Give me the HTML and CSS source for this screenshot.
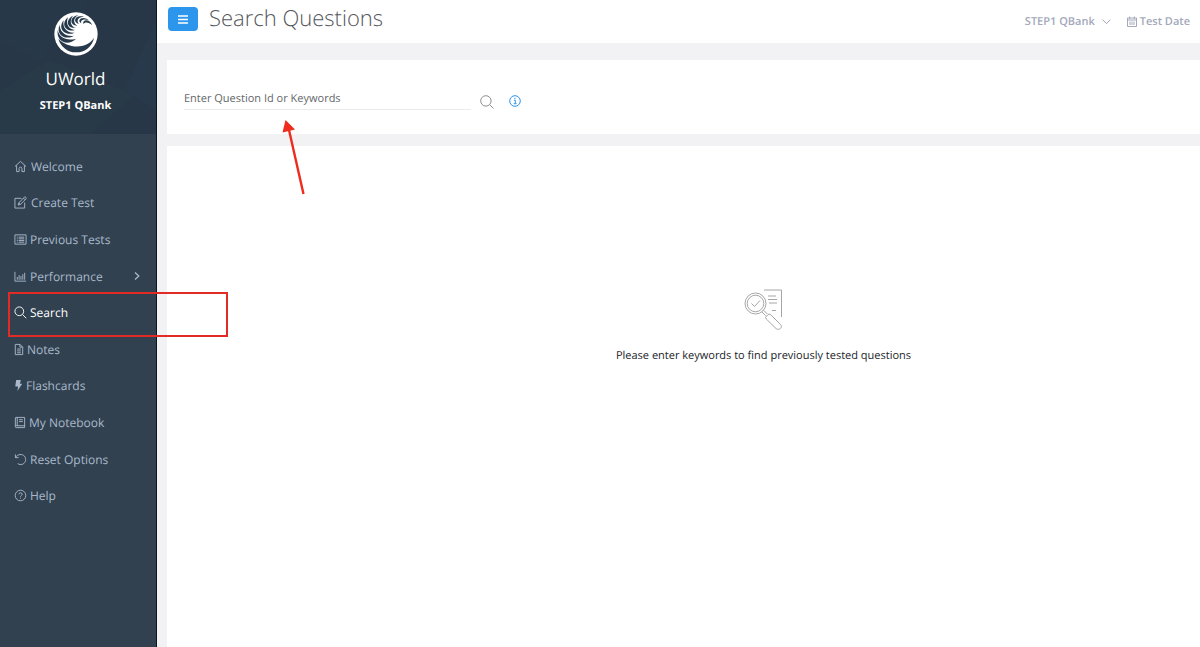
FILE: index.html
```html
<!DOCTYPE html>
<html lang="en">
<head>
<meta charset="utf-8">
<title>Search Questions</title>
<link rel="stylesheet" href="styles.css">
</head>
<body>
<div class="app">
  <aside class="sidebar">
    <div class="brand">
      <svg class="brand-facets" viewBox="0 0 156 134" preserveAspectRatio="none" aria-hidden="true"><path d="M0 0H90L40 60 0 40Z" fill="#29404f" opacity=".2"/><path d="M156 20L125 90 156 110Z" fill="#263f57" opacity=".25"/><path d="M0 90L50 60 135 95 90 134H0Z" fill="#2a3b48" opacity=".4"/></svg>
      <svg class="logo" viewBox="0 0 132 132" aria-hidden="true">
        <circle cx="66" cy="66" r="65" fill="#fff"/>
        <g fill="#263a4b">
          <path d="M13 80C30 99 62 108 87 101C102 97 113 89 120 77C115 104 93 121 66 121C40 121 20 104 13 80Z"/>
          <path d="M11 54C15 76 37 88 66 80C44 103 6 92 11 54Z"/>
          <path d="M17 38C17 60 36 75 61 71C34 87 4 68 17 38Z"/>
          <path d="M29 25C24 47 39 64 62 62C34 75 9 50 29 25Z"/>
          <path d="M42 16C34 36 44 53 63 54C36 63 18 36 42 16Z"/>
          <path d="M57 11C45 26 50 44 66 47C42 52 30 25 57 11Z"/>
          <path d="M73 9C57 18 57 34 70 41C49 42 43 15 73 9Z"/>
          <path d="M90 14C72 15 66 26 75 36C55 31 61 6 90 14Z"/>
          <path d="M105 25C89 19 78 25 82 34C66 25 85 8 105 25Z"/>
          <path d="M115 40C104 29 92 29 88 36C84 22 107 19 115 40Z"/>
        </g>
      </svg>
      <div class="brand-name">UWorld</div>
      <div class="brand-product">STEP1 QBank</div>
    </div>
    <nav class="nav" aria-label="Main">
      <a class="nav-item" href="#"><svg class="icon home" viewBox="0 0 14 14"><path d="M1 7L7 1.5 13 7M2.8 5.8V12.5H5.5V9C5.5 7.2 8.5 7.2 8.5 9V12.5H11.2V5.8"/></svg>Welcome</a>
      <a class="nav-item" href="#"><svg class="icon home" viewBox="0 0 14 14"><path d="M8 2.5H1V13H11.5V7M4.5 9.8L5.3 7.2 11.3 1.2Q12 .7 12.8 1.5T13 3L7 9ZM10.2 2.3L12 4.1M5.3 7.2L7 9"/></svg>Create Test</a>
      <a class="nav-item" href="#"><svg class="icon" viewBox="0 0 14 14"><path d="M1 2H13V12H1ZM3 4.5H4M5 4.5H11M3 6.3H4M5 6.3H11M3 8.1H4M5 8.1H11M3 9.9H4M5 9.9H11"/></svg>Previous Tests</a>
      <a class="nav-item" href="#"><svg class="icon" viewBox="0 0 14 14"><path d="M1 2V12H13M3.5 10.5V7.5M5.5 10.5V5.5M7.5 10.5V6.5M9.5 10.5V4.5M11.5 10.5V3"/></svg>Performance<svg class="caret" viewBox="0 0 6 8"><path d="M1 .5L4.8 4 1 7.5"/></svg></a>
      <a class="nav-item active" href="#" aria-current="page"><svg class="icon" viewBox="0 0 14 14"><circle cx="5.7" cy="5.7" r="4.7"/><path d="M9.2 9.2L13.2 13.2"/></svg>Search</a>
      <a class="nav-item" href="#"><svg class="icon notes" viewBox="0 0 10 14"><path d="M1 1.5H6L9 4.5V12.5H1ZM6 1.5V4.5H9M3 6.5H7M3 8.5H7M3 10.5H7"/></svg>Notes</a>
      <a class="nav-item" href="#"><svg class="icon bolt" viewBox="0 0 8 14"><path d="M1.5 1H6.5L5.5 5H8L2.8 13 3.6 8H.5Z"/></svg>Flashcards</a>
      <a class="nav-item" href="#"><svg class="icon book" viewBox="0 0 12 14"><path d="M1 2Q1 1.5 1.5 1.5H11V12.5H2Q1 12.5 1 11.5ZM1 10.5H11M3 1.5V10.5M5 4H9M5 6H9"/></svg>My Notebook</a>
      <a class="nav-item" href="#"><svg class="icon" viewBox="0 0 14 14"><path d="M1.5 1.5V5H5M1.5 5C4 .8 9 .8 11.3 3.5C13.5 6.3 12.6 10.5 9.5 12Q6.5 13.3 4 11.5"/></svg>Reset Options</a>
      <a class="nav-item" href="#"><svg class="icon" viewBox="0 0 14 14"><circle cx="7" cy="7" r="5.7"/><path d="M5.2 5.7C5.2 3.6 8.8 3.6 8.8 5.7C8.8 7 7 6.9 7 8.3M7 9.4V10.4"/></svg>Help</a>
    </nav>
  </aside>
  <div class="page">
    <header class="topbar">
      <button class="menu-btn" type="button" aria-label="Toggle menu"><svg viewBox="0 0 10 9"><path d="M0 1H10M0 4.5H10M0 8H10"/></svg></button>
      <h1 class="title">Search Questions</h1>
      <button class="top-link" type="button">STEP1 QBank<svg class="chevron" viewBox="0 0 9 6"><path d="M.7 .7L4.5 4.7 8.3 .7"/></svg></button>
      <a class="top-link date" href="#"><svg class="calendar" viewBox="0 0 10 12"><path d="M.5 2H9.5V10.5H.5ZM.5 4H9.5M2.7 .5V3M7.3 .5V3M3 5.5V9M5 5.5V9M7 5.5V9"/></svg>Test Date</a>
    </header>
    <main class="content">
      <form class="card search">
        <input class="query" type="text" placeholder="Enter Question Id or Keywords" aria-label="Enter Question Id or Keywords">
        <button class="icon-btn" type="button" aria-label="Search"><svg class="find" viewBox="0 0 14 14"><circle cx="5.9" cy="5.9" r="5.2"/><path d="M9.7 9.7L13.5 13.5"/></svg></button>
        <button class="icon-btn" type="button" aria-label="Search help"><svg class="info" viewBox="0 0 12 12"><circle cx="6" cy="6" r="5.3"/><path d="M5 5.2H6.3V8.7M4.8 8.7H7.6M5.9 2.8V4"/></svg></button>
      </form>
      <section class="card results">
        <svg class="empty-art" viewBox="0 0 40 42" aria-hidden="true">
          <path d="M20 1H37.5V28M24 7H32M24 10.5H33M25 14H33M28 21.5H32"/>
          <circle cx="11.5" cy="14.5" r="10.5"/><circle cx="11.5" cy="14.5" r="8.3"/>
          <path d="M7.5 14.5L10.5 17.5 16 11.5M18 23L21.7 26.7M19.7 21.3L23.4 25M22 27.5L25 25Q26 25 27 26L36.7 35.7C39 38.5 35 42 32 39.5L22.3 30Q21 28.7 22 27.5Z"/>
        </svg>
        <p class="empty-text">Please enter keywords to find previously tested questions</p>
      </section>
    </main>
  </div>
</div>
<div class="highlight"></div>
<svg class="arrow" viewBox="0 0 26 78" aria-hidden="true"><path d="M21.5 74L7 10" stroke="#ef2b1d" stroke-width="2.4"/><path d="M3.5 0L13 9.5 .5 12.5Z" fill="#ef2b1d"/></svg>
</body>
</html>
```
FILE: styles.css
```css
* { box-sizing: border-box; }
body { margin: 0; font-family: "Open Sans", "Noto Sans", sans-serif; font-size: 12px; color: #212529; text-rendering: geometricPrecision; }
button, input { text-rendering: inherit; }
button { border: 0; padding: 0; background: none; font: inherit; color: inherit; cursor: pointer; }
a { color: inherit; text-decoration: none; }
svg { flex: none; display: block; fill: none; stroke: currentColor; }
.app { display: flex; min-height: 100vh; }

.sidebar { flex: none; width: 157px; background: #314150; border-right: 1px solid #0e161d; color: #a9b9cb; }
.brand { position: relative; display: flex; flex-direction: column; align-items: center; height: 134px; padding: 12px 5px 0 0; background: #273747; color: #fff; }
.brand-facets { position: absolute; inset: 0; width: 100%; height: 100%; stroke: none; }
.logo { position: relative; width: 44px; height: 44px; stroke: none; }
.brand-name { position: relative; margin-top: 11px; font-size: 17px; line-height: 24px; }
.brand-product { position: relative; margin-top: 6px; font-size: 11px; font-weight: 700; line-height: 18px; }
.nav { display: grid; grid-auto-rows: 1fr; min-height: 366px; margin-top: 14px; }
.nav-item { display: flex; align-items: center; gap: 3px; padding: 0 16px 0 14px; }
.nav-item.active { color: #fff; font-weight: 500; }
.icon { width: 13px; height: 13px; }
.home { margin-right: 1px; }
.notes { width: 10px; }
.bolt { width: 9px; fill: currentColor; stroke: none; }
.book { width: 12px; }
.caret { width: 6px; height: 8px; margin-left: auto; stroke-width: 1.3; }

.page { flex: 1; min-width: 0; display: flex; flex-direction: column; background: #f2f2f4; }
.topbar { display: flex; align-items: flex-start; height: 43px; padding: 7px 10px 0 11px; background: #fff; color: #a3a8bb; }
.menu-btn { display: grid; place-items: center; width: 30px; height: 24px; border-radius: 4px; background: #2c96ed; color: #fff; }
.menu-btn svg { width: 10px; height: 9px; stroke-width: 1.6; }
.title { flex: 1; margin: -4px 0 0 11px; font-size: 22px; font-weight: 300; line-height: 30px; color: #54575b; }
.top-link { display: flex; align-items: center; font-size: 11px; font-weight: 600; line-height: 18px; padding-top: 6px; }
.chevron { width: 9px; height: 6px; margin-left: 7px; }
.date { margin-left: 16px; }
.calendar { width: 10px; height: 12px; margin-right: 3px; }
.content { flex: 1; display: flex; flex-direction: column; gap: 12px; padding: 17px 0 0 10px; }
.card { background: #fff; }
.search { display: flex; align-items: flex-start; height: 74px; padding: 27px 17px 0; }
.query { width: 287px; height: 23px; padding: 0; border: 0; border-bottom: 1px solid #ececec; background: none; font: inherit; font-size: 11px; color: #54575b; outline: 0; }
.query::placeholder { color: #64676b; opacity: 1; }
.icon-btn { display: grid; place-items: center; height: 28px; color: #8d8d8d; }
.find { width: 14px; height: 14px; margin: 2px 0 0 9px; }
.info { width: 12px; height: 12px; margin-left: 15px; color: #2c96ed; }
.results { flex: 1; display: flex; flex-direction: column; align-items: center; padding: 143px 0 0 160px; }
.empty-art { width: 40px; height: 42px; color: #8f8f8f; stroke-width: .8; }
.empty-text { margin: 16px 0 0; font-size: 11px; line-height: 18px; }

.highlight { position: absolute; left: 8px; top: 292px; width: 220px; height: 45px; border: 2px solid #e32b25; }
.arrow { position: absolute; left: 282px; top: 120px; width: 26px; height: 78px; stroke: none; }
```
